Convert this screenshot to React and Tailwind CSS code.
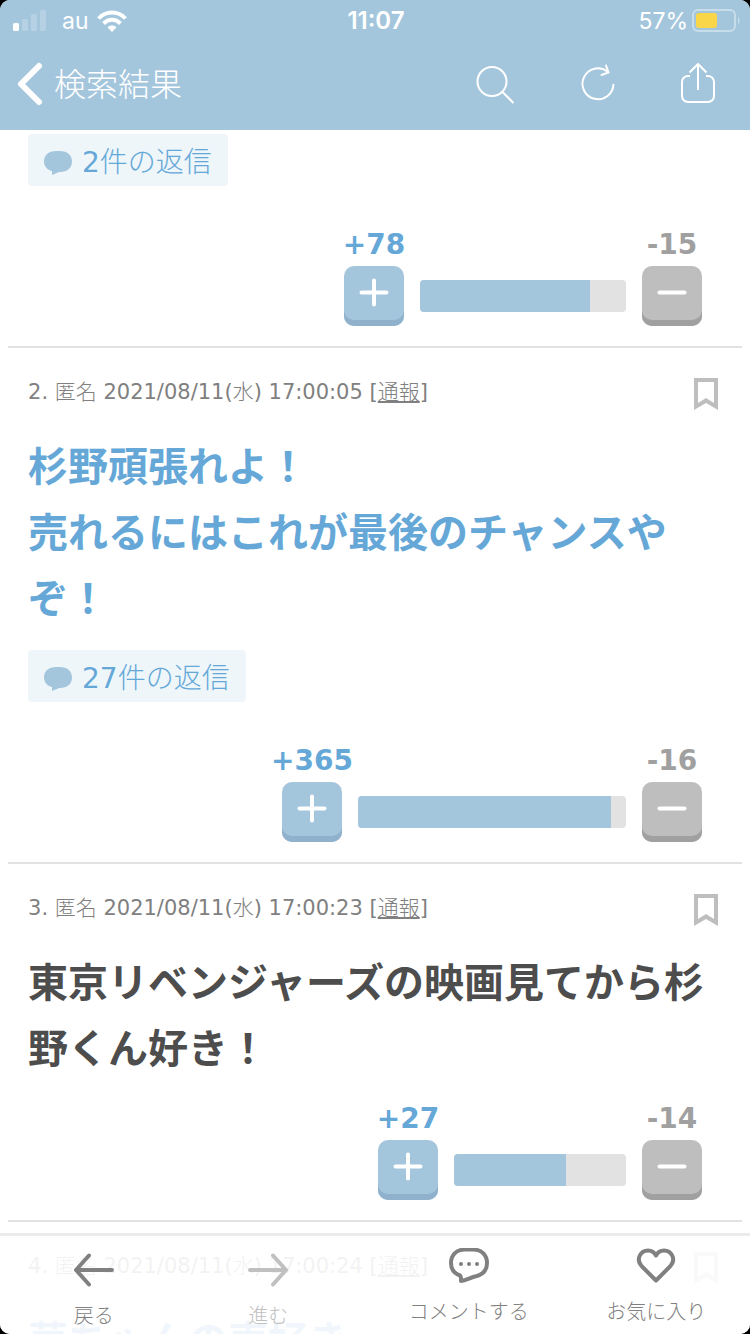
const comments = [
  { id: 1, replies: 2, plus: 78, minus: 15, barWidth: 206, fill: 82.5 },
  {
    id: 2,
    time: '17:00:05',
    lines: ['杉野頑張れよ！', '売れるにはこれが最後のチャンスやぞ！'],
    tone: 'text-[#65a8d8]',
    replies: 27,
    plus: 365,
    minus: 16,
    barWidth: 268,
    fill: 94.5,
  },
  {
    id: 3,
    time: '17:00:23',
    lines: ['東京リベンジャーズの映画見てから杉野くん好き！'],
    tone: 'text-[#4d4d4d]',
    plus: 27,
    minus: 14,
    barWidth: 172,
    fill: 65,
  },
  {
    id: 4,
    time: '17:00:24',
    lines: ['華ちゃんの声好き'],
    tone: 'text-[#65a8d8]',
  },
];

function StatusBar() {
  return (
    <div className="grid h-10 grid-cols-3 items-center pt-0.5 pr-2.5 pl-3 font-['Inter','Liberation_Sans',sans-serif] text-[23px]">
      <div className="flex items-center">
        <svg className="h-[22px] w-[34px]" viewBox="0 0 34 22" fill="#fff">
          <rect x="1" y="13" width="6" height="8" rx="1.5" />
          <rect x="10" y="9" width="6" height="12" rx="1.5" opacity=".2" />
          <rect x="19" y="4" width="6" height="17" rx="1.5" opacity=".2" />
          <rect x="28" y="0" width="6" height="21" rx="1.5" opacity=".2" />
        </svg>
        <span className="ml-4">au</span>
        <svg className="ml-2 h-[22px] w-[30px]" viewBox="0 0 30 22" fill="none" stroke="#fff" strokeWidth="4">
          <path d="M1.500 8.500C9 .5 21 .5 28.500 8.500" />
          <path d="M6.500 13.500C11.500 8.500 18.500 8.500 23.500 13.500" />
          <path d="M10.500 17.300C13 15 17 15 19.500 17.300L15 22Z" fill="#fff" stroke="none" />
        </svg>
      </div>
      <span className="text-center text-2xl font-semibold">11:07</span>
      <div className="flex items-center justify-end">
        <span>57%</span>
        <svg className="ml-1 h-6 w-12 shrink-0" viewBox="0 0 48 24">
          <rect x="1" y="1" width="42" height="21" rx="5" fill="none" stroke="#fff" strokeOpacity=".4" strokeWidth="2" />
          <rect x="4" y="4" width="21" height="15" rx="3" fill="#f8d648" />
          <path d="M46 8c2 1 2 6 0 7z" fill="#fff" fillOpacity=".4" />
        </svg>
      </div>
    </div>
  );
}

function Header() {
  return (
    <header className="flex-none bg-[#a4c6dd] text-white">
      <StatusBar />
      <div className="flex h-[90px] items-center pr-[34px] pb-0.5 pl-4">
        <button type="button" className="mr-auto flex items-center gap-2 text-[32px] leading-10 font-light">
          <svg className="h-[44px] w-[30px]" viewBox="0 0 30 44" fill="none" stroke="#fff" strokeWidth="6" strokeLinecap="round" strokeLinejoin="round">
            <path d="M23 4L5 22L23 40" />
          </svg>
          <span className="pt-0.5">検索結果</span>
        </button>
        <div className="flex items-center gap-[62px]">
          <button type="button" aria-label="検索">
            <svg className="h-10 w-10" viewBox="0 0 40 40" fill="none" stroke="#fff" strokeWidth="2">
              <circle cx="16" cy="17.500" r="14.500" />
              <path d="M26 27.500L37.500 39" />
            </svg>
          </button>
          <button type="button" aria-label="更新">
            <svg className="h-10 w-10" viewBox="0 0 40 40" fill="none" stroke="#fff" strokeWidth="2">
              <path d="M35.500 20A15.500 15.500 0 1 1 29.500 7.500" />
              <path d="M28 1.500L30.500 8.500L23.500 11" strokeLinecap="round" />
            </svg>
          </button>
          <button type="button" aria-label="共有">
            <svg className="h-[42px] w-[36px]" viewBox="0 0 36 42" fill="none" stroke="#fff" strokeWidth="2" strokeLinejoin="round">
              <path d="M10 13H8a6 6 0 0 0-6 6v14a6 6 0 0 0 6 6h20a6 6 0 0 0 6-6V19a6 6 0 0 0-6-6h-2" />
              <path d="M18 27V2M9.500 9.500L18 1L26.500 9.500" />
            </svg>
          </button>
        </div>
      </div>
    </header>
  );
}

function ReplyButton({ count }) {
  return (
    <button type="button" className="mb-[22px] flex h-[52px] items-center gap-2.5 rounded bg-[#eef6fa] px-4 pt-[5px] text-[28px] text-[#65a8d8]">
      <svg className="h-[26px] w-7" viewBox="0 0 28 26" fill="#a4c6dd">
        <path d="M12 1h4c7 0 12 4 12 10.500S23 22 16 22c-2 0-5 2-8 3v-4C3 20 0 16 0 11.500C0 5 5 1 12 1z" />
      </svg>
      <span>{count}<span className="font-light">件の返信</span></span>
    </button>
  );
}

function Votes({ plus, minus, barWidth, fill }) {
  return (
    <div className="flex items-end justify-end gap-4 pt-4 pr-5 pb-5">
      <div className="flex w-[60px] flex-col items-center">
        <span className="text-[28px] leading-[42px] font-bold text-[#65a8d8]">+{plus}</span>
        <button type="button" aria-label="プラス" className="flex size-[60px] justify-center rounded-[10px] bg-[#a4c6dd] pt-3 shadow-[inset_0_-6px_0_#8fb1cb]">
          <svg className="h-[30px] w-[30px]" viewBox="0 0 30 30" stroke="#fff" strokeWidth="4" strokeLinecap="round">
            <path d="M15 2.500V26.500M2.500 14.500H27.500" />
          </svg>
        </button>
      </div>
      <div className="mb-3.5 h-8 overflow-hidden rounded bg-[#e2e2e2]" style={{ width: barWidth }}>
        <div className="h-full bg-[#a4c6dd]" style={{ width: `${fill}%` }} />
      </div>
      <div className="flex w-[60px] flex-col items-center">
        <span className="text-[28px] leading-[42px] font-bold text-[#a0a0a0]">-{minus}</span>
        <button type="button" aria-label="マイナス" className="flex size-[60px] justify-center rounded-[10px] bg-[#bebebe] pt-3 shadow-[inset_0_-6px_0_#a0a0a0]">
          <svg className="h-[30px] w-[30px]" viewBox="0 0 30 30" stroke="#fff" strokeWidth="4" strokeLinecap="round">
            <path d="M2.500 14.500H27.500" />
          </svg>
        </button>
      </div>
    </div>
  );
}

function Comment({ comment }) {
  const { id, time, lines, tone, replies, plus } = comment;
  return (
    <article className="mx-2 border-b-2 border-[#e2e2e2] px-5">
      {time && (
        <div className="flex items-start justify-between pt-[30px] pr-1 pb-6">
          <p className="text-[21px] leading-7 text-[#808080]">
            {id}. <span className="font-light">匿名</span> 2021/08/11(<span className="font-light">水</span>) {time} [
            <a href="#report" className="font-light underline">通報</a>]
          </p>
          <button type="button" aria-label="ブックマーク">
            <svg className="h-8 w-6" viewBox="0 0 24 32" fill="#bebebe" fillRule="evenodd">
              <path d="M0 0H24V32L12 25L0 32ZM4 4V25L12 20L20 25V4Z" />
            </svg>
          </button>
        </div>
      )}
      {lines && (
        <div className={`text-[40px] leading-[66px] font-bold ${tone}`}>
          {lines.map((line) => (
            <p key={line}>{line}</p>
          ))}
        </div>
      )}
      {replies && <div className={lines ? 'pt-[18px]' : 'pt-1'}><ReplyButton count={replies} /></div>}
      {plus && <Votes {...comment} />}
    </article>
  );
}

function Toolbar() {
  return (
    <nav className="absolute inset-x-0 bottom-0 grid h-[101px] grid-cols-4 border-t-[3px] border-[#ebebeb] bg-white/90 text-xl font-light text-[#808080]">
      <button type="button" className="flex flex-col items-center gap-3.5 pt-4">
        <svg className="h-9 w-10" viewBox="0 0 40 36" fill="none" stroke="currentColor" strokeWidth="4" strokeLinecap="round" strokeLinejoin="round">
          <path d="M38 18H2M15 3.500L2 18L15 32.500" />
        </svg>
        戻る
      </button>
      <button type="button" disabled className="flex flex-col items-center gap-3.5 pt-4 pr-[26px] text-[#c0c0c0]">
        <svg className="h-9 w-10" viewBox="0 0 40 36" fill="none" stroke="currentColor" strokeWidth="4" strokeLinecap="round" strokeLinejoin="round">
          <path d="M2 18H38M25 3.500L38 18L25 32.500" />
        </svg>
        進む
      </button>
      <button type="button" className="flex flex-col items-center gap-3.5 pt-3">
        <svg className="h-9 w-10" viewBox="0 0 40 36" fill="none" stroke="currentColor" strokeWidth="4" strokeLinejoin="round">
          <path d="M16 1.500H24C33 1.500 38 7.500 38 15S33 27 26 28.500C21 29.500 17 33 12 33C12 30.500 12.500 29 11 27.500C5 25.500 2 21 2 15C2 7.500 7 1.500 16 1.500Z" />
          <g fill="currentColor" stroke="none">
            <circle cx="12" cy="16" r="2" />
            <circle cx="20" cy="16" r="2" />
            <circle cx="28" cy="16" r="2" />
          </g>
        </svg>
        コメントする
      </button>
      <button type="button" className="flex flex-col items-center gap-3.5 pt-3">
        <svg className="h-9 w-10" viewBox="0 0 40 36" fill="none" stroke="currentColor" strokeWidth="4" strokeLinejoin="round">
          <path d="M20 32.500L6 18.500C-1 11 5 2.500 12 2.500C16 2.500 18.500 4.500 20 7.500C21.500 4.500 24 2.500 28 2.500C35 2.500 41 11 34 18.500Z" />
        </svg>
        お気に入り
      </button>
    </nav>
  );
}

export default function App() {
  return (
    <div className="h-screen w-full bg-black font-['DejaVu_Sans','Noto_Sans_CJK_JP',sans-serif]" lang="ja">
      <div className="relative flex h-full flex-col overflow-hidden rounded-[10px] bg-white">
        <Header />
        <main className="min-h-0 flex-1 overflow-hidden">
          {comments.map((comment) => (
            <Comment key={comment.id} comment={comment} />
          ))}
        </main>
        <Toolbar />
      </div>
    </div>
  );
}
